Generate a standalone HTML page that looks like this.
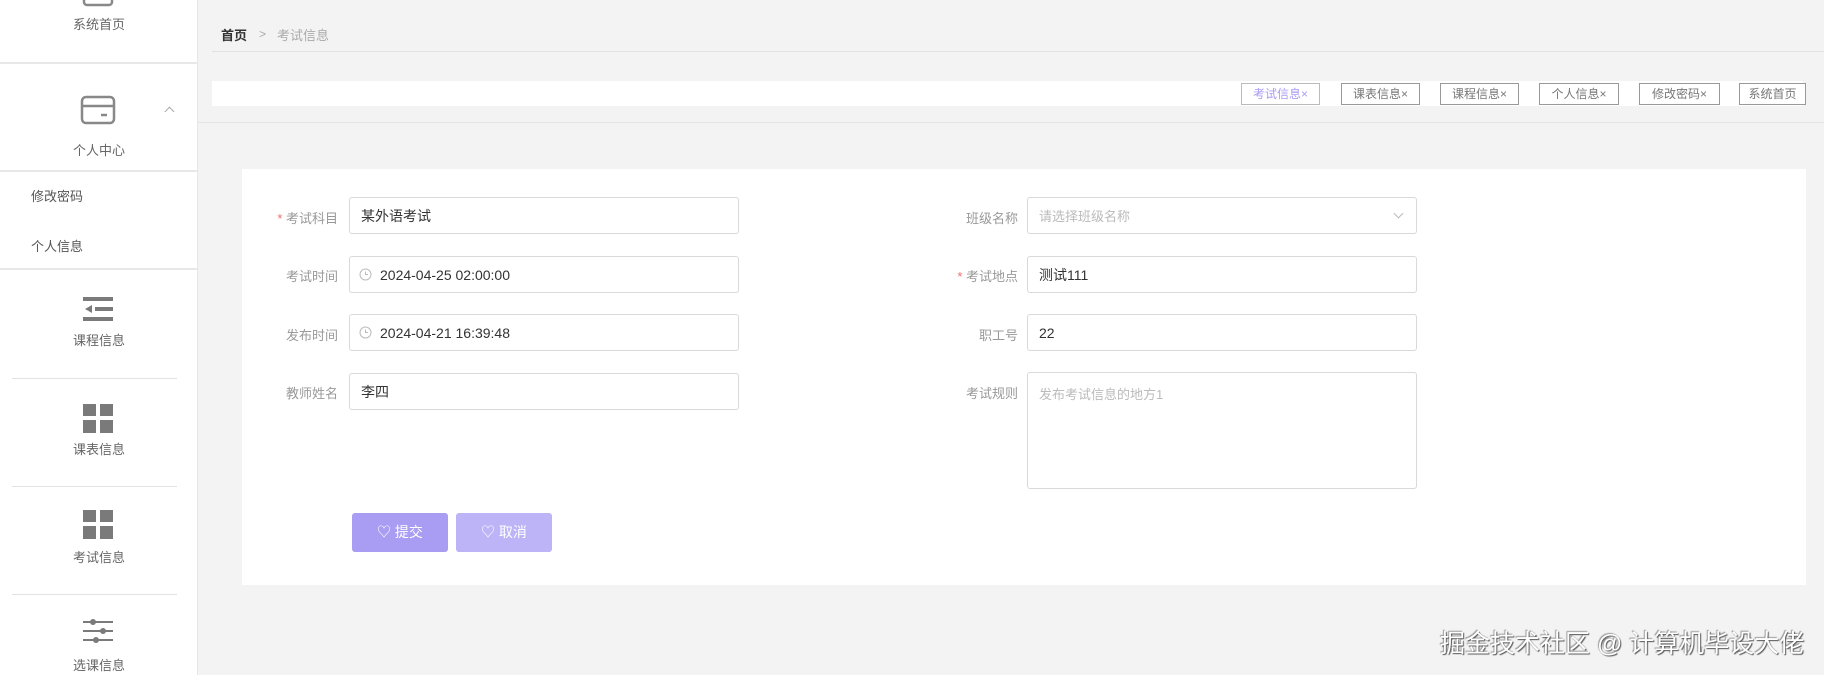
<!DOCTYPE html>
<html><head><meta charset="utf-8"><style>
*{box-sizing:border-box;margin:0;padding:0}
body{width:1824px;height:675px;overflow:hidden;background:#f3f3f3;font-family:"Liberation Sans","Noto Sans CJK SC",sans-serif;position:relative}
.a{position:absolute}
.side{left:0;top:0;width:198px;height:675px;background:#fff;border-right:1px solid #e6e6e6}
.st{font-size:13px;color:#666;width:198px;text-align:center}
.sep{height:2px;background:#e8e8e8;left:0;width:198px}
.sep2{height:1px;background:#e3e3e3;left:12px;width:165px}
.ic{fill:#7a7a7a}
.tab{top:83px;height:22px;border:1px solid #999;background:#fff;font-size:12px;color:#777;text-align:center;line-height:20px}
.lbl{font-size:13px;color:#999;text-align:right;width:120px}
.inp{height:37px;border:1px solid #d9d9d9;border-radius:3px;background:#fff;font-size:14px;color:#333;line-height:37px;padding-left:11px}
.btn{top:513px;height:39px;border-radius:3px;color:#fff;font-size:14px;line-height:39px;text-align:center}
</style></head><body>
<div class="a side">
 <svg class="a" style="left:82px;top:-12px" width="32" height="20"><rect x="2" y="0" width="28" height="17" rx="3" fill="none" stroke="#888" stroke-width="2.5"/></svg>
 <div class="a st" style="top:14px">系统首页</div>
 <div class="a sep" style="top:62px"></div>
 <svg class="a" style="left:80px;top:95px" width="36" height="32"><rect x="2" y="2" width="32" height="26" rx="4" fill="none" stroke="#888" stroke-width="2.5"/><line x1="2" y1="11" x2="34" y2="11" stroke="#888" stroke-width="2.5"/><line x1="21" y1="20" x2="27" y2="20" stroke="#888" stroke-width="2.5"/></svg>
 <div class="a" style="left:166px;top:108px;width:7px;height:7px;border-left:1px solid #aaa;border-top:1px solid #aaa;transform:rotate(45deg)"></div>
 <div class="a st" style="top:140px">个人中心</div>
 <div class="a sep" style="top:170px"></div>
 <div class="a" style="left:31px;top:186px;font-size:13px;color:#555">修改密码</div>
 <div class="a" style="left:31px;top:236px;font-size:13px;color:#555">个人信息</div>
 <div class="a sep" style="top:268px"></div>
 <svg class="a" style="left:83px;top:297px" width="30" height="24"><rect class="ic" x="0" y="0" width="30" height="4"/><rect class="ic" x="12" y="10" width="18" height="4"/><polygon class="ic" points="2,12 9,8 9,16"/><rect class="ic" x="0" y="20" width="30" height="4"/></svg>
 <div class="a st" style="top:330px">课程信息</div>
 <div class="a sep2" style="top:378px"></div>
 <svg class="a" style="left:83px;top:404px" width="30" height="30"><rect class="ic" x="0" y="0" width="13" height="12"/><rect class="ic" x="17" y="0" width="13" height="12"/><rect class="ic" x="0" y="16" width="13" height="13"/><rect class="ic" x="17" y="16" width="13" height="13"/></svg>
 <div class="a st" style="top:439px">课表信息</div>
 <div class="a sep2" style="top:486px"></div>
 <svg class="a" style="left:83px;top:510px" width="30" height="30"><rect class="ic" x="0" y="0" width="13" height="12"/><rect class="ic" x="17" y="0" width="13" height="12"/><rect class="ic" x="0" y="16" width="13" height="13"/><rect class="ic" x="17" y="16" width="13" height="13"/></svg>
 <div class="a st" style="top:547px">考试信息</div>
 <div class="a sep2" style="top:594px"></div>
 <svg class="a" style="left:83px;top:619px" width="30" height="30"><g stroke="#7a7a7a" stroke-width="2"><line x1="0" y1="3" x2="30" y2="3"/><line x1="0" y1="12" x2="30" y2="12"/><line x1="0" y1="21" x2="30" y2="21"/></g><circle class="ic" cx="10" cy="3" r="3"/><circle class="ic" cx="20" cy="12" r="3"/><circle class="ic" cx="13" cy="21" r="3"/></svg>
 <div class="a st" style="top:655px">选课信息</div>
</div>
<div class="a" style="left:221px;top:25px;font-size:13px;color:#333;font-weight:bold">首页</div>
<div class="a" style="left:259px;top:27px;font-size:12px;color:#aaa">&gt;</div>
<div class="a" style="left:277px;top:25px;font-size:13px;color:#aaa">考试信息</div>
<div class="a" style="left:212px;top:51px;width:1612px;height:1px;background:#e2e2e2"></div>
<div class="a" style="left:212px;top:81px;width:1591px;height:25px;background:#fff"></div>
<div class="a" style="left:198px;top:122px;width:1626px;height:1px;background:#e6e6e6"></div>
<div class="a tab" style="left:1241px;width:79px;color:#a99cf3;border-color:#bbb">考试信息×</div>
<div class="a tab" style="left:1341px;width:79px">课表信息×</div>
<div class="a tab" style="left:1440px;width:79px">课程信息×</div>
<div class="a tab" style="left:1539px;width:80px">个人信息×</div>
<div class="a tab" style="left:1639px;width:81px">修改密码×</div>
<div class="a tab" style="left:1739px;width:67px">系统首页</div>
<div class="a" style="left:242px;top:169px;width:1564px;height:416px;background:#fff"></div>
<div class="a lbl" style="left:218px;top:208px"><span style="color:#f56c6c">* </span>考试科目</div>
<div class="a lbl" style="left:218px;top:266px">考试时间</div>
<div class="a lbl" style="left:218px;top:325px">发布时间</div>
<div class="a lbl" style="left:218px;top:383px">教师姓名</div>
<div class="a inp" style="left:349px;top:197px;width:390px">某外语考试</div>
<div class="a inp" style="left:349px;top:256px;width:390px;padding-left:30px">2024-04-25 02:00:00</div>
<div class="a inp" style="left:349px;top:314px;width:390px;padding-left:30px">2024-04-21 16:39:48</div>
<svg class="a" style="left:359px;top:268px" width="13" height="13"><circle cx="6.5" cy="6.5" r="5.5" fill="none" stroke="#bbb"/><path d="M6.5 3.5V6.5H9" fill="none" stroke="#bbb"/></svg>
<svg class="a" style="left:359px;top:326px" width="13" height="13"><circle cx="6.5" cy="6.5" r="5.5" fill="none" stroke="#bbb"/><path d="M6.5 3.5V6.5H9" fill="none" stroke="#bbb"/></svg>
<div class="a inp" style="left:349px;top:373px;width:390px">李四</div>
<div class="a lbl" style="left:898px;top:208px">班级名称</div>
<div class="a lbl" style="left:898px;top:266px"><span style="color:#f56c6c">* </span>考试地点</div>
<div class="a lbl" style="left:898px;top:325px">职工号</div>
<div class="a lbl" style="left:898px;top:383px">考试规则</div>
<div class="a inp" style="left:1027px;top:197px;width:390px;color:#bbb;font-size:13px">请选择班级名称</div>
<div class="a" style="left:1395px;top:210px;width:7px;height:7px;border-right:1px solid #bbb;border-bottom:1px solid #bbb;transform:rotate(45deg)"></div>
<div class="a inp" style="left:1027px;top:256px;width:390px">测试111</div>
<div class="a inp" style="left:1027px;top:314px;width:390px">22</div>
<div class="a inp" style="left:1027px;top:372px;width:390px;height:117px;line-height:20px;padding-top:12px;color:#bbb;font-size:13px">发布考试信息的地方1</div>
<div class="a btn" style="left:352px;width:96px;background:#a99cf3">♡ 提交</div>
<div class="a btn" style="left:456px;width:96px;background:#bdb3f7">♡ 取消</div>
<div class="a" style="left:1440px;top:624px;font-size:25px;color:#fff;text-shadow:1px 1px 1px #555,-1px -1px 1px #999;white-space:nowrap">掘金技术社区 @ 计算机毕设大佬</div>
</body></html>
